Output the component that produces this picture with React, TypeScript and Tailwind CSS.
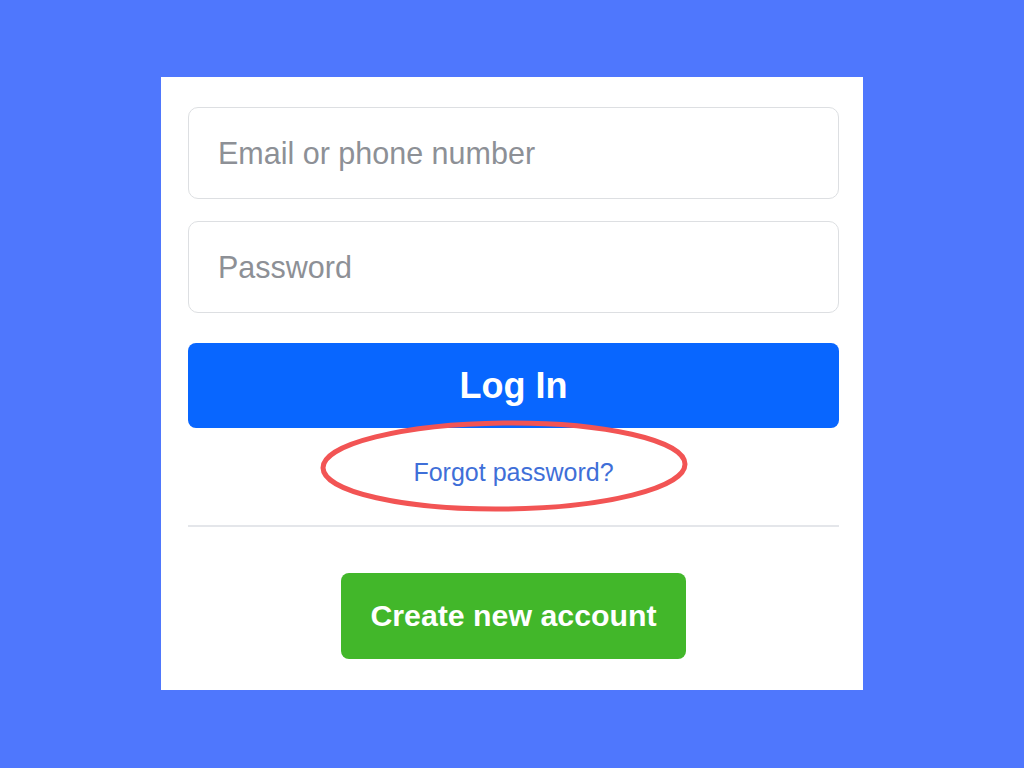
export default function App() {
  return (
    <div
      className="min-h-screen w-full bg-[#4f77fd] flex justify-center pt-[77px]"
      style={{ fontFamily: '"Liberation Sans", Arial, sans-serif' }}
    >
      <div className="w-[702px] h-[613px] bg-white pl-[27px] pr-[24px] pt-[30px] flex flex-col">
        <input
          type="text"
          placeholder="Email or phone number"
          className="h-[92px] w-full rounded-[10px] border border-[#dddfe2] px-[29px] text-[30.5px] text-[#1c1e21] placeholder:text-[#8d9096] outline-none"
        />
        <input
          type="password"
          placeholder="Password"
          className="mt-[22px] h-[92px] w-full rounded-[10px] border border-[#dddfe2] px-[29px] text-[30.5px] text-[#1c1e21] placeholder:text-[#8d9096] outline-none"
        />
        <button className="mt-[30px] h-[85px] w-full rounded-[8px] bg-[#0866ff] text-white text-[36px] font-bold">
          Log In
        </button>
        <div className="relative h-[97px] flex flex-col items-center pt-[29px]">
          <a href="#" className="text-[25px] leading-[30px] text-[#3f6fd8]">
            Forgot password?
          </a>
          {/* red circle marking the link */}
          <svg
            className="absolute left-[130px] top-[-10px] pointer-events-none"
            width="372"
            height="98"
            viewBox="0 0 372 98"
          >
            <ellipse
              cx="186"
              cy="48"
              rx="181"
              ry="43"
              fill="none"
              stroke="#f25454"
              strokeWidth="5"
              transform="rotate(-0.6 186 48)"
            />
          </svg>
        </div>
        <div className="h-[2px] w-full bg-[#e4e6ea]" />
        <div className="flex justify-center mt-[46px]">
          <button className="h-[86px] w-[345px] rounded-[8px] bg-[#42b72a] text-white text-[30.3px] font-bold">
            Create new account
          </button>
        </div>
      </div>
    </div>
  );
}
